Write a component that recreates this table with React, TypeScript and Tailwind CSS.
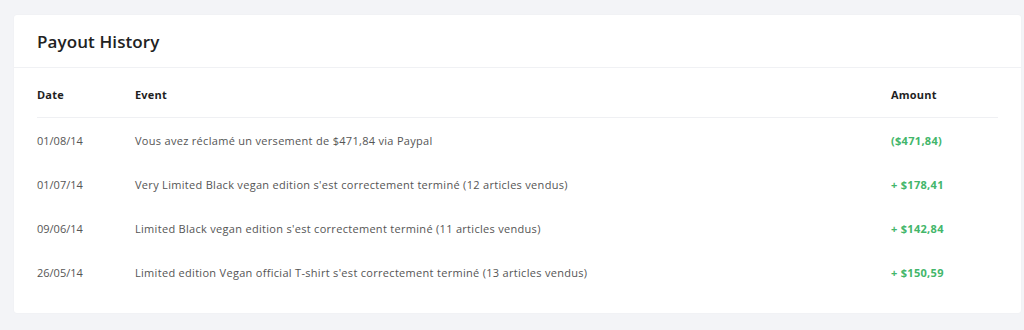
const rows = [
  { date: "01/08/14", event: "Vous avez réclamé un versement de $471,84 via Paypal", amount: "($471,84)" },
  { date: "01/07/14", event: "Very Limited Black vegan edition s'est correctement terminé (12 articles vendus)", amount: "+ $178,41" },
  { date: "09/06/14", event: "Limited Black vegan edition s'est correctement terminé (11 articles vendus)", amount: "+ $142,84" },
  { date: "26/05/14", event: "Limited edition Vegan official T-shirt s'est correctement terminé (13 articles vendus)", amount: "+ $150,59" },
];

export default function App() {
  return (
    <div
      className="min-h-[330px] w-full bg-[#f3f4f7] pt-[15px] pl-[14px] pr-[3px]"
      style={{ fontFamily: '"Open Sans", "DejaVu Sans", sans-serif' }}
    >
      <div className="bg-white rounded-[3px] shadow-[0_0_2px_rgba(0,0,0,0.04)]">
        <div className="h-[53px] border-b border-[#f0f1f4] px-[23px] flex items-center">
          <h2 className="text-[17px] font-semibold text-[#222] tracking-[0.1px] pt-[1px]">Payout History</h2>
        </div>
        <div className="px-[23px] pb-[19px]">
          <div className="grid grid-cols-[98px_1fr_107px] h-[50px] items-end pb-[14px] border-b border-[#eff0f3] text-[11px] font-bold text-[#1f1f1f] tracking-[0.2px]">
            <div>Date</div>
            <div>Event</div>
            <div>Amount</div>
          </div>
          {rows.map((r) => (
            <div key={r.date} className="grid grid-cols-[98px_1fr_107px] h-[44px] pt-[2px] items-center text-[11px] text-[#555] tracking-[0.3px]">
              <div className="tracking-normal">{r.date}</div>
              <div>{r.event}</div>
              <div className="font-bold text-[#43b66a]">{r.amount}</div>
            </div>
          ))}
        </div>
      </div>
    </div>
  );
}
